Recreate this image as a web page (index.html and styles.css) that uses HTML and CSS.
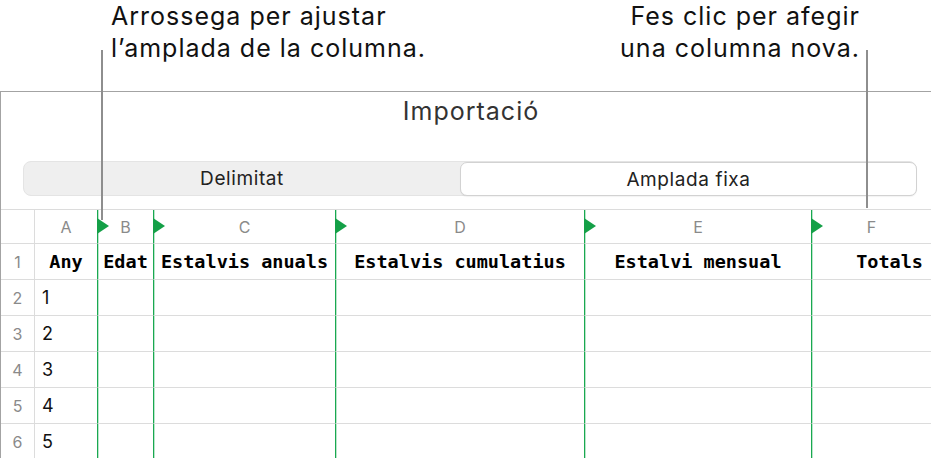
FILE: index.html
```html
<!DOCTYPE html>
<html lang="ca">
<head>
    <meta charset="UTF-8">
    <title>Importació</title>
    <link rel="stylesheet" href="styles.css">
</head>
<body>
    <div class="page">
        <div class="callouts">
            <p class="callout">Arrossega per ajustar<br>l’amplada de la columna.</p>
            <p class="callout callout-right">Fes clic per afegir<br>una columna nova.</p>
        </div>

        <div class="panel">
            <h1 class="title">Importació</h1>

            <div class="segmented">
                <div class="segment">Delimitat</div>
                <div class="segment selected">Amplada fixa</div>
            </div>

            <div class="sheet">
                <div class="cell corner"></div>
                <div class="cell col-head">A</div>
                <div class="cell col-head edge">B</div>
                <div class="cell col-head edge">C</div>
                <div class="cell col-head edge">D</div>
                <div class="cell col-head edge">E</div>
                <div class="cell col-head edge">F</div>

                <div class="cell row-head">1</div>
                <div class="cell head-text">Any</div>
                <div class="cell head-text split">Edat</div>
                <div class="cell head-text split">Estalvis anuals</div>
                <div class="cell head-text split">Estalvis cumulatius</div>
                <div class="cell head-text split">Estalvi mensual</div>
                <div class="cell head-text split totals">Totals</div>

                <div class="cell row-head">2</div>
                <div class="cell value">1</div>
                <div class="cell split"></div><div class="cell split"></div><div class="cell split"></div><div class="cell split"></div><div class="cell split"></div>

                <div class="cell row-head">3</div>
                <div class="cell value">2</div>
                <div class="cell split"></div><div class="cell split"></div><div class="cell split"></div><div class="cell split"></div><div class="cell split"></div>

                <div class="cell row-head">4</div>
                <div class="cell value">3</div>
                <div class="cell split"></div><div class="cell split"></div><div class="cell split"></div><div class="cell split"></div><div class="cell split"></div>

                <div class="cell row-head">5</div>
                <div class="cell value">4</div>
                <div class="cell split"></div><div class="cell split"></div><div class="cell split"></div><div class="cell split"></div><div class="cell split"></div>

                <div class="cell row-head">6</div>
                <div class="cell value">5</div>
                <div class="cell split"></div><div class="cell split"></div><div class="cell split"></div><div class="cell split"></div><div class="cell split"></div>
            </div>
        </div>

        <!-- línies de les anotacions -->
        <span class="leader leader-left"></span>
        <span class="leader leader-right"></span>
    </div>
</body>
</html>
```

FILE: styles.css
```css
* {
    margin: 0;
    padding: 0;
    box-sizing: border-box;
}

body {
    background: #fff;
    color: #111;
    font-family: 'Inter', 'Liberation Sans', sans-serif;
    overflow: hidden;
}

.page {
    position: relative;
    width: 931px;
    height: 458px;
    overflow: hidden;
}

.callouts {
    height: 91px;
    display: flex;
    justify-content: space-between;
    padding: 0 71px 0 111px;
}

.callout {
    font-size: 25px;
    letter-spacing: 1px;
    line-height: 32px;
    color: #111;
}

.callout-right {
    text-align: right;
}

.panel {
    border-top: 1px solid #a3a3a3;
    border-left: 1px solid #a3a3a3;
    padding-top: 4px;
}

.title {
    font-size: 25px;
    font-weight: 400;
    letter-spacing: 1px;
    line-height: 30px;
    text-align: center;
    color: #333;
    padding-left: 10px;
}

.segmented {
    display: grid;
    grid-template-columns: 436px 1fr;
    height: 35px;
    margin: 35px 14px 13px 22px;
    background: #efefef;
    border: 1px solid #e4e4e4;
    border-radius: 8px;
}

.segment {
    display: flex;
    align-items: center;
    justify-content: center;
    font-size: 19px;
    letter-spacing: 0.6px;
    color: #222;
}

.segment.selected {
    background: #fff;
    border: 1px solid #d2d2d2;
    border-radius: 7px;
    margin: 0 -1px -1px 0;
    box-shadow: 0 1px 1px rgba(0, 0, 0, 0.05);
}

.sheet {
    display: grid;
    grid-template-columns: 34px 62px 56px 182px 249px 227px 1fr;
    grid-template-rows: 34px repeat(6, 36px);
    border-top: 1px solid #dcdcdc;
}

.cell {
    border-bottom: 1px solid #dcdcdc;
    display: flex;
    align-items: center;
    white-space: nowrap;
}

.corner, .row-head {
    border-right: 1px solid #dcdcdc;
}

.col-head {
    position: relative;
    justify-content: center;
    font-size: 16px;
    color: #8a8a8a;
}

.row-head {
    justify-content: center;
    font-size: 16px;
    color: #8a8a8a;
}

.split, .col-head.edge {
    border-left: 1px solid #19a850;
    box-shadow: inset 1px 0 0 rgba(25, 168, 80, 0.3);
}

.col-head.edge::before {
    content: '';
    position: absolute;
    left: -1px;
    top: 8px;
    border-left: 12px solid #14a047;
    border-top: 8.5px solid transparent;
    border-bottom: 8.5px solid transparent;
}

.head-text {
    justify-content: center;
    font-family: 'DejaVu Sans Mono', 'Liberation Mono', monospace;
    font-weight: 700;
    font-size: 18.5px;
    color: #000;
}

.head-text.totals {
    justify-content: flex-end;
    padding-right: 8px;
}

.value {
    padding-left: 7px;
    font-size: 18px;
    color: #111;
}

.leader {
    position: absolute;
    width: 2px;
    background: #8e8e8e;
}

.leader-left {
    left: 101px;
    top: 50px;
    height: 170px;
}

.leader-right {
    left: 866px;
    top: 50px;
    height: 158px;
}
```
